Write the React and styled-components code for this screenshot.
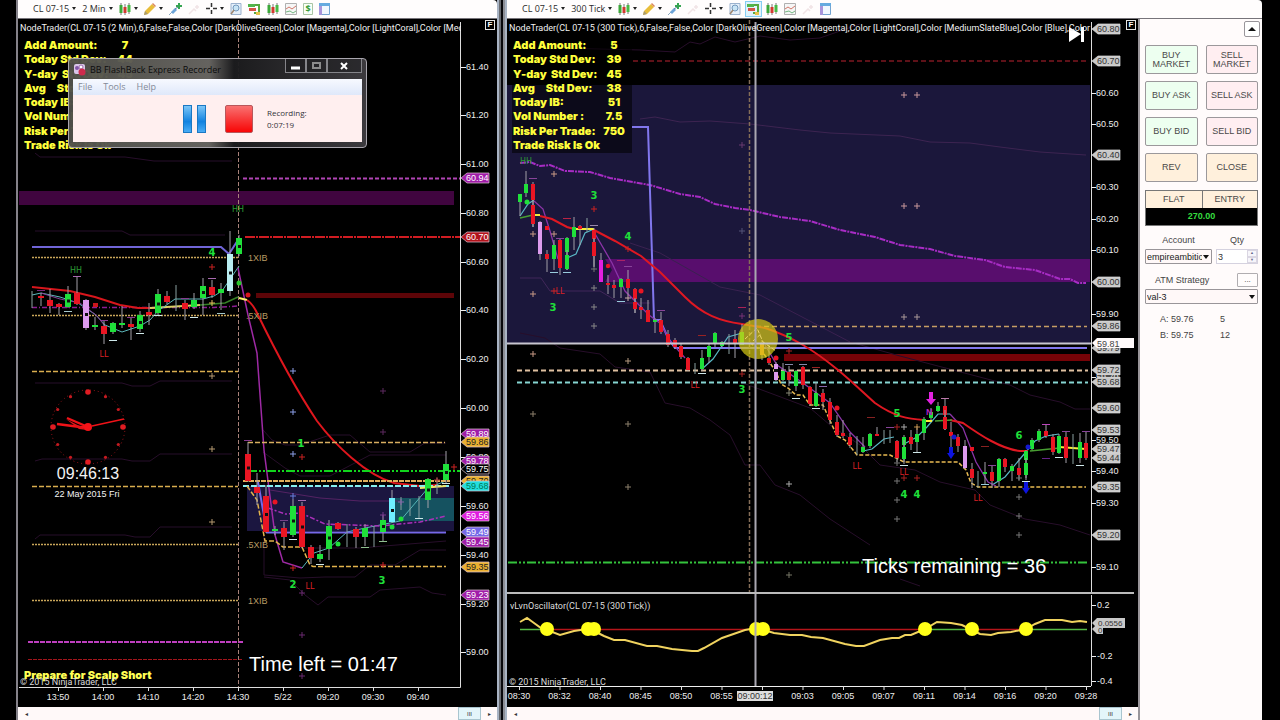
import React from "react";
import styled, { createGlobalStyle } from "styled-components";

const GlobalStyle = createGlobalStyle`
  * {
    box-sizing: border-box;
  }

  body {
    margin: 0;
    background: #000000;
    font-family: "Liberation Sans", Arial, sans-serif;
  }

  button,
  input,
  select {
    margin: 0;
    font-family: inherit;
  }
`;

const Desktop = styled.main`
  display: grid;
  grid-template-columns: 18px minmax(0, 479fr) 10px minmax(0, 755fr) 18px;
  height: 100vh;
  overflow: hidden;
`;

const Edge = styled.div`
  background: #000000;
  border-right: ${props => (props.line ? "2px solid #85828a" : "none")};
`;

const Splitter = styled.div`
  border-left: 2px solid #a9b4c4;
  border-right: 2px solid #a9b4c4;
  background: linear-gradient(
    90deg,
    #66696f 0,
    #66696f 2px,
    #08080c 2px,
    #08080c 4px,
    #8b8d94 4px
  );
`;

const Window = styled.section`
  position: relative;
  display: flex;
  flex-direction: column;
  min-width: 0;
  min-height: 0;
`;

const Toolbar = styled.header`
  display: flex;
  align-items: center;
  gap: 2px;
  flex: none;
  height: 19px;
  padding-left: 13px;
  padding-bottom: 1px;
  background: #fffdfd;
  border-bottom: 1px solid #77747a;
  border-radius: 0 4px 0 0;
`;

const ToolButton = styled.button`
  display: flex;
  align-items: center;
  justify-content: center;
  gap: 3px;
  flex: none;
  height: 16px;
  min-width: 13px;
  padding: 0 1px;
  border: 1px solid ${props => (props.active ? "#86cdf2" : "transparent")};
  background: ${props => (props.active ? "#dff3fd" : "transparent")};
  color: #2b2b2b;
  font-family: "Open Sans", sans-serif;
  font-size: 9px;
  line-height: 12px;
  white-space: nowrap;
`;

const Caret = styled.span`
  width: 0;
  height: 0;
  border: 2px solid transparent;
  border-top: 3px solid #222222;
  border-bottom: none;
`;

const Body = styled.div`
  display: flex;
  flex: 1;
  min-height: 0;
`;

const ChartColumn = styled.div`
  display: flex;
  flex: 1;
  flex-direction: column;
  min-width: 0;
  min-height: 0;
`;

const Pane = styled.div`
  position: relative;
  flex: 1;
  min-height: 0;
  background: #000000;
  overflow: hidden;
`;

const Plot = styled.svg`
  display: block;
  width: 100%;
  height: 100%;
`;

const Title = styled.h1`
  position: absolute;
  top: 3px;
  left: 2px;
  right: ${props => props.inset}px;
  margin: 0;
  overflow: hidden;
  color: #f2f2f2;
  font-family: Roboto, "Liberation Sans", sans-serif;
  font-size: 9px;
  font-weight: 400;
  line-height: 12px;
  white-space: nowrap;
`;

const FixedButton = styled.button`
  position: absolute;
  top: 1px;
  right: 2px;
  width: 10px;
  height: 10px;
  padding: 0;
  border: 1px solid #e5e5e5;
  background: #000000;
  color: #ffffff;
  font-size: 8px;
  font-weight: 700;
  line-height: 8px;
`;

const Readout = styled.dl`
  position: absolute;
  top: 18px;
  left: 5px;
  display: grid;
  grid-template-columns: 86px 30px;
  width: 120px;
  height: 116px;
  margin: 0;
  padding: 1px;
  background: rgba(0, 0, 0, 0.55);
  color: #ffff3c;
  font-family: Inter, "Open Sans", sans-serif;
  font-size: 11px;
  font-weight: 900;
  line-height: 14px;
  white-space: pre;
`;

const ReadoutValue = styled.dd`
  margin: 0;
  text-align: center;
`;

const ScrollStrip = styled.footer`
  display: flex;
  align-items: center;
  flex: none;
  height: 13px;
  padding: 0 4px;
  background: #fff9f9;
`;

const ScrollButton = styled.button`
  flex: none;
  width: ${props => (props.thumb ? "23px" : "8px")};
  height: 13px;
  margin-left: ${props => (props.thumb ? "auto" : "0")};
  margin-right: ${props => (props.thumb ? "4px" : "0")};
  padding: 0;
  border: ${props => (props.thumb ? "1px solid #a9c5cf" : "none")};
  background: ${props => (props.thumb ? "#e3f5fa" : "none")};
  color: #333333;
  font-size: 6px;
  line-height: 10px;
`;

const OrderPanel = styled.aside`
  display: flex;
  flex: none;
  flex-direction: column;
  width: 124px;
  padding: 2px 4px 0 5px;
  border-left: 2px solid #99959a;
  background: #fffbfb;
  color: #444444;
  font-size: 9px;
`;

const CollapseButton = styled.button`
  display: flex;
  align-items: center;
  justify-content: center;
  align-self: flex-end;
  width: 16px;
  height: 16px;
  margin: 0 -2px 8px 0;
  padding: 0;
  border: 1px solid #99959a;
  border-radius: 2px;
  background: #ffffff;
`;

const Triangle = styled.span`
  width: 0;
  height: 0;
  border: 4px solid transparent;
  border-bottom: 4px solid #111111;
  border-top: none;
`;

const OrderGrid = styled.div`
  display: grid;
  grid-template-columns: 1fr 1fr;
  gap: 7px 8px;
`;

const tones = { buy: "#edfff0", sell: "#ffeef1", neutral: "#fff0dc" };

const OrderButton = styled.button`
  height: 29px;
  padding: 0 4px;
  border: 1px solid #9b989b;
  border-radius: 2px;
  background: ${props => tones[props.tone]};
  color: #494949;
  font-size: 9px;
  line-height: 9px;
`;

const Position = styled.div`
  display: grid;
  grid-template-columns: 1fr 1fr;
  margin-top: 8px;
  border: 1px solid #777777;
  background: #fff0dc;
  color: #494949;
  line-height: 17px;
  text-align: center;
`;

const PositionCell = styled.span`
  border-left: ${props => (props.divided ? "1px solid #777777" : "none")};
`;

const Profit = styled.output`
  grid-column: 1 / -1;
  background: #000000;
  color: #35dc3f;
  font-weight: 700;
  line-height: 17px;
`;

const FieldRow = styled.div`
  display: grid;
  grid-template-columns: 67px 1fr;
  gap: 2px 4px;
  margin-top: 8px;
  line-height: 13px;
  text-align: center;
`;

const SelectBox = styled.div`
  position: relative;
  display: flex;
  align-items: center;
  height: 15px;

  &::after {
    content: "";
    position: absolute;
    right: 3px;
    border: 3px solid transparent;
    border-top: 4px solid #111111;
    border-bottom: none;
    pointer-events: none;
  }
`;

const Select = styled.select`
  width: 100%;
  height: 15px;
  padding: 0 9px 0 1px;
  appearance: none;
  overflow: hidden;
  border: 1px solid #999599;
  border-radius: 1px;
  background: #fff8f8;
  color: #222222;
  font-size: 9px;
  line-height: 12px;
`;

const QtyBox = styled.div`
  display: flex;
  height: 15px;
  border: 1px solid #d5d2df;
`;

const QtyInput = styled.input`
  flex: 1;
  width: 20px;
  min-width: 0;
  padding: 0 1px;
  border: none;
  background: #ffffff;
  color: #333333;
  font-size: 9px;
`;

const Stepper = styled.div`
  display: flex;
  flex-direction: column;
  width: 10px;
`;

const Step = styled.button`
  flex: 1;
  padding: 0;
  border: 1px solid #dad6e2;
  background: #f6f5fa;
  color: #66668a;
  font-size: 4px;
  line-height: 4px;
`;

const StrategyRow = styled.div`
  display: flex;
  align-items: center;
  justify-content: space-between;
  margin: 9px 0 2px;
  padding-left: 10px;
`;

const MoreButton = styled.button`
  width: 21px;
  height: 14px;
  padding: 0;
  border: 1px solid #b0adb0;
  border-radius: 1px;
  background: #fffcfc;
  color: #444444;
  font-size: 8px;
  line-height: 8px;
`;

const Quotes = styled.dl`
  display: grid;
  grid-template-columns: 60px 1fr;
  margin: 7px 0 0;
  padding-left: 15px;
  line-height: 16px;
`;

const QuoteSize = styled.dd`
  margin: 0;
`;

const Recorder = styled.section`
  position: absolute;
  top: 58px;
  left: 50px;
  width: 299px;
  height: 90px;
  padding: 0 4px 5px;
  border: 1px solid #a9a6ae;
  border-radius: 4px;
  background: linear-gradient(
    90deg,
    rgba(80, 80, 74, 0.97) 0,
    rgba(104, 102, 98, 0.97) 140px,
    rgba(28, 28, 30, 0.97) 165px,
    rgba(62, 60, 64, 0.97) 100%
  );
`;

const RecorderBar = styled.div`
  display: flex;
  align-items: center;
  height: 20px;
  gap: 4px;
  color: #0c0c0c;
  font-family: "Open Sans", sans-serif;
  font-size: 9px;
`;

const WindowButtons = styled.div`
  display: flex;
  align-self: flex-start;
  margin-left: auto;
`;

const WindowButton = styled.button`
  display: flex;
  align-items: center;
  justify-content: center;
  width: ${props => (props.wide ? "35px" : "21px")};
  height: 14px;
  padding: 0;
  border: 1px solid #85858a;
  border-top: none;
  background: rgba(20, 20, 22, 0.4);
  color: ${props => (props.dim ? "#8c8c8c" : "#ffffff")};
`;

const RecorderMenu = styled.nav`
  display: flex;
  gap: 11px;
  height: 16px;
  padding-left: 5px;
  background: linear-gradient(#f7f9ff, #dfe8fa);
`;

const MenuButton = styled.button`
  padding: 0;
  border: none;
  background: none;
  color: #838a98;
  font-family: "Open Sans", sans-serif;
  font-size: 9px;
  line-height: 14px;
`;

const RecorderBody = styled.div`
  display: flex;
  align-items: center;
  height: 47px;
  padding-left: 110px;
  background: #ffefef;
`;

const MediaButton = styled.button`
  display: flex;
  gap: 5px;
  margin-right: ${props => props.space}px;
  padding: 0;
  border: none;
  background: none;
`;

const PauseBar = styled.span`
  width: 9px;
  height: 28px;
  border: 1px solid #1a78c4;
  background: linear-gradient(#7cc6f7, #1282e0 60%, #49acf5);
`;

const StopSquare = styled.span`
  width: 28px;
  height: 28px;
  border: 1px solid #b8565a;
  border-radius: 2px;
  background: linear-gradient(#f97171, #f83a3a 50%, #f80606);
`;

const Elapsed = styled.p`
  margin: 0;
  color: #33333a;
  font-family: "Open Sans", sans-serif;
  font-size: 8px;
  line-height: 12px;
`;

const GREEN = "#1fe03a";
const RED = "#ea1523";
const LILAC = "#dd9bee";
const GOLD = "#e8bd5c";
const PURPLE = "#a01ca8";

// x, high, low, body top, body bottom, colour
const leftBars = [
  [32, 291, 308, 0, 0],
  [41, 293, 306, 296, 298, RED],
  [50, 289, 313, 300, 306, RED],
  [59, 303, 315, 304, 307, RED],
  [68, 286, 308, 294, 307, GREEN],
  [77, 277, 305, 293, 304, RED],
  [86, 299, 330, 300, 328, LILAC],
  [95, 317, 330, 325, 327, GREEN],
  [104, 320, 344, 326, 334, RED],
  [113, 322, 334, 323, 332, GREEN],
  [122, 306, 328, 323, 325, GREEN],
  [131, 318, 340, 324, 327, RED],
  [140, 311, 332, 315, 329, GREEN],
  [149, 303, 325, 312, 315, RED],
  [158, 289, 315, 294, 313, GREEN],
  [167, 291, 304, 296, 302, RED],
  [176, 285, 311, 0, 0],
  [185, 300, 320, 303, 309, RED],
  [194, 293, 309, 300, 307, GREEN],
  [203, 278, 315, 286, 298, GREEN],
  [212, 280, 298, 287, 295, RED],
  [221, 283, 310, 289, 293, GREEN],
  [230, 231, 296, 254, 291, "#b9eef2"],
  [239, 235, 256, 238, 254, GREEN],
  [248, 442, 482, 454, 481, RED],
  [257, 473, 505, 487, 493, RED],
  [266, 485, 533, 496, 532, RED],
  [275, 526, 535, 529, 531, GREEN],
  [284, 522, 550, 528, 537, RED],
  [293, 499, 537, 506, 535, GREEN],
  [302, 502, 548, 506, 547, RED],
  [311, 545, 564, 547, 558, RED],
  [320, 545, 562, 554, 559, GREEN],
  [329, 520, 560, 526, 549, GREEN],
  [338, 522, 530, 523, 529, RED],
  [347, 524, 547, 0, 0],
  [356, 527, 548, 529, 537, RED],
  [365, 524, 546, 528, 537, GREEN],
  [374, 526, 547, 0, 0],
  [383, 515, 541, 520, 532, GREEN],
  [392, 490, 523, 498, 522, "#6ff0ff"],
  [401, 497, 510, 0, 0],
  [410, 499, 516, 0, 0],
  [419, 496, 518, 0, 0],
  [428, 478, 508, 479, 500, GREEN],
  [437, 478, 494, 0, 0],
  [446, 451, 484, 464, 480, GREEN]
];

const rightBars = [
  [520, 194, 216, 194, 202, GREEN],
  [526, 171, 197, 184, 193, GREEN],
  [533, 182, 227, 184, 200, RED],
  [533, 200, 227, 205, 224, RED],
  [540, 221, 260, 222, 254, LILAC],
  [547, 250, 272, 254, 259, RED],
  [554, 240, 270, 245, 259, GREEN],
  [560, 238, 275, 240, 268, RED],
  [567, 237, 270, 238, 252, GREEN],
  [567, 250, 270, 255, 269, GREEN],
  [574, 217, 250, 227, 237, GREEN],
  [580, 225, 245, 226, 229, RED],
  [587, 218, 232, 0, 0],
  [594, 228, 267, 230, 239, RED],
  [594, 238, 267, 242, 256, RED],
  [601, 253, 282, 260, 282, "#e21fe0"],
  [608, 275, 294, 283, 285, RED],
  [614, 280, 298, 285, 288, RED],
  [621, 278, 298, 279, 287, GREEN],
  [628, 270, 295, 279, 288, RED],
  [635, 288, 313, 289, 299, RED],
  [635, 298, 313, 302, 309, RED],
  [641, 298, 319, 307, 310, RED],
  [648, 300, 322, 310, 322, RED],
  [655, 318, 333, 320, 322, GREEN],
  [661, 312, 334, 320, 332, RED],
  [668, 330, 347, 334, 345, RED],
  [675, 338, 349, 340, 347, RED],
  [681, 344, 359, 346, 357, RED],
  [688, 357, 371, 358, 370, RED],
  [695, 363, 374, 0, 0],
  [702, 350, 371, 358, 369, GREEN],
  [709, 344, 363, 346, 357, GREEN],
  [715, 332, 347, 333, 344, GREEN],
  [722, 341, 347, 342, 346, GREEN],
  [729, 334, 354, 0, 0],
  [735, 330, 358, 339, 344, RED],
  [742, 324, 345, 332, 345, GREEN],
  [762, 340, 360, 343, 355, "#f48a28"],
  [769, 345, 365, 358, 363, RED],
  [776, 362, 381, 364, 380, LILAC],
  [783, 363, 381, 371, 380, GREEN],
  [789, 366, 386, 372, 380, RED],
  [796, 370, 391, 371, 386, GREEN],
  [803, 366, 389, 367, 385, RED],
  [810, 386, 406, 387, 404, RED],
  [816, 382, 407, 393, 406, GREEN],
  [823, 389, 410, 393, 402, RED],
  [830, 398, 424, 402, 420, RED],
  [837, 415, 437, 422, 435, RED],
  [843, 420, 438, 433, 436, RED],
  [850, 433, 448, 437, 445, RED],
  [857, 436, 455, 0, 0],
  [863, 437, 453, 447, 452, GREEN],
  [870, 433, 448, 434, 446, GREEN],
  [877, 427, 436, 434, 436, RED],
  [884, 430, 444, 0, 0],
  [890, 430, 443, 0, 0],
  [897, 440, 462, 441, 458, RED],
  [904, 435, 462, 437, 445, GREEN],
  [904, 440, 464, 447, 459, GREEN],
  [911, 430, 450, 437, 444, RED],
  [917, 426, 452, 434, 442, GREEN],
  [924, 417, 440, 419, 433, GREEN],
  [931, 408, 420, 412, 418, GREEN],
  [938, 402, 412, 406, 411, GREEN],
  [945, 399, 430, 406, 415, RED],
  [945, 410, 430, 417, 429, RED],
  [951, 422, 448, 432, 436, RED],
  [958, 434, 452, 437, 446, RED],
  [965, 440, 469, 446, 468, LILAC],
  [972, 463, 488, 469, 478, RED],
  [978, 471, 488, 0, 0],
  [985, 462, 484, 472, 474, GREEN],
  [992, 466, 488, 472, 481, RED],
  [999, 458, 487, 459, 481, GREEN],
  [1005, 458, 472, 459, 467, RED],
  [1012, 464, 481, 466, 471, GREEN],
  [1019, 458, 480, 468, 475, RED],
  [1026, 450, 478, 451, 460, GREEN],
  [1026, 458, 480, 463, 475, GREEN],
  [1032, 438, 450, 440, 449, GREEN],
  [1039, 429, 442, 431, 440, GREEN],
  [1046, 425, 438, 431, 436, RED],
  [1053, 434, 455, 437, 452, RED],
  [1059, 434, 454, 436, 453, GREEN],
  [1066, 431, 463, 437, 458, RED],
  [1073, 434, 464, 0, 0],
  [1080, 433, 463, 442, 458, GREEN],
  [1086, 432, 460, 443, 458, RED]
];

// text, x, y, colour
const leftNotes = [
  ["HH", 76, 273, "#2c9a35"],
  ["HH", 238, 212, "#2c9a35"],
  ["LL", 104, 357, "#da2025"],
  ["LL", 310, 589, "#da2025"],
  ["4", 212, 256, GREEN],
  ["1", 301, 447, GREEN],
  ["2", 293, 588, GREEN],
  ["3", 382, 584, GREEN]
];

const rightNotes = [
  ["HH", 526, 164, "#2c9a35"],
  ["3", 594, 199, GREEN],
  ["4", 628, 240, GREEN],
  ["3", 553, 311, GREEN],
  ["LL", 560, 294, "#da2025"],
  ["LL", 695, 388, "#da2025"],
  ["3", 742, 393, GREEN],
  ["5", 789, 341, GREEN],
  ["5", 897, 417, GREEN],
  ["LL", 857, 469, "#da2025"],
  ["LL", 904, 475, "#da2025"],
  ["4", 904, 498, GREEN],
  ["4", 917, 498, GREEN],
  ["LL", 978, 501, "#da2025"],
  ["6", 1019, 439, GREEN]
];

const leftCrosses = [
  [212, 267, "#c22"], [212, 303, GOLD], [212, 376, "#b69a70"], [212, 449, "#b69a70"],
  [212, 522, "#b69a70"], [293, 371, "#8c9fe8"], [293, 412, "#8c9fe8"], [293, 454, "#8c9fe8"],
  [302, 457, "#c22"], [383, 391, "#5e2a60"], [383, 432, "#5e2a60"], [293, 496, "#6b80e0"],
  [293, 568, "#c22"], [302, 593, "#6b2a70"], [302, 635, "#6b2a70"], [302, 676, "#6b2a70"],
  [383, 515, "#7d3a90"], [383, 565, "#c22"], [401, 502, "#86a"], [437, 480, "#a33"], [454, 467, "#c22"]
];

const rightCrosses = [
  [554, 174, "#c99a86"], [533, 234, "#c99a86"], [554, 234, "#c99a86"], [594, 209, "#c22"],
  [628, 249, "#c22"], [594, 269, "#777"], [594, 288, "#888"], [594, 307, "#888"], [594, 326, "#888"],
  [533, 294, "#c99a86"], [533, 354, "#c99a86"], [628, 361, "#b69a80"], [628, 298, "#caa"],
  [554, 291, "#c22"], [742, 231, "#555478"], [742, 145, "#693a70"], [742, 316, "#737"],
  [533, 414, "#8d806c"], [628, 424, "#8d806c"], [628, 487, "#8d806c"],
  [904, 95, "#c9989c"], [917, 95, "#c9989c"], [904, 206, "#c9989c"], [917, 206, "#c9989c"],
  [904, 317, "#a99"], [917, 317, "#a99"], [742, 374, "#a22"], [789, 351, "#a22"],
  [789, 393, "#887"], [789, 484, "#aaa"], [789, 575, "#776"], [897, 427, "#a22"],
  [904, 427, "#aaa"], [917, 427, "#b84"], [897, 463, "#777"], [897, 481, "#777"],
  [897, 500, "#777"], [897, 519, "#777"], [904, 478, "#a22"], [917, 478, "#a22"],
  [1019, 478, "#777"], [1019, 497, "#777"], [1019, 516, "#777"], [1019, 535, "#777"]
];

// short level marks above and below bars
const leftDashes = [
  [77, 276, "#a96ab0"], [41, 290, "#7a2a80"], [68, 311, "#a8c9cc"], [104, 320, "#8a3a90"],
  [113, 340, "#cfe8ea"], [131, 317, "#8a3a90"], [140, 333, "#cfe8ea"], [158, 315, "#cfe8ea"],
  [185, 298, "#8a3a90"], [194, 317, "#cfe8ea"], [212, 278, "#a96ab0"], [221, 313, "#9fc6ca"],
  [248, 440, "#8a3a90"], [302, 500, "#a96ab0"], [293, 539, "#cfe8ea"], [284, 520, "#76408a"],
  [320, 564, "#cfe8ea"], [365, 547, "#8fc08f"], [383, 541, "#8fc08f"], [419, 518, "#cfe8ea"],
  [446, 483, "#cfe8ea"]
];

const rightDashes = [
  [533, 178, "#849"], [560, 238, "#849"], [554, 272, "#9cd"], [567, 272, "#9cd"], [567, 218, "#b24"],
  [594, 225, "#98a"], [628, 266, "#849"], [621, 301, "#9cd"], [621, 260, "#a26"], [661, 310, "#849"],
  [702, 373, "#cfe8ea"], [702, 335, "#922"], [742, 307, "#a25"], [789, 364, "#88a"],
  [803, 364, "#88a"], [796, 398, "#cfe8ea"], [816, 408, "#cfe8ea"], [823, 386, "#86a"],
  [816, 367, "#922"], [871, 417, "#822"], [890, 427, "#849"], [904, 465, "#cfe8ea"],
  [917, 452, "#cfe8ea"], [945, 398, "#b7a"], [1046, 424, "#b4b"], [1066, 431, "#849"],
  [1086, 431, "#849"], [985, 484, "#9cd"], [992, 465, "#849"], [985, 446, "#822"],
  [1026, 481, "#cfe8ea"], [1059, 457, "#cfe8ea"], [1080, 465, "#cfe8ea"], [1046, 458, "#628"]
];

const leftTicks = [
  ["61.40", 67], ["61.20", 115], ["61.00", 164], ["60.80", 213], ["60.60", 262], ["60.40", 310],
  ["60.20", 359], ["60.00", 408], ["59.80", 457], ["59.60", 506], ["59.40", 555], ["59.20", 604],
  ["59.00", 652]
];

const rightTicks = [
  ["60.60", 93], ["60.50", 124], ["60.30", 187], ["60.20", 219], ["60.10", 250], ["59.90", 314],
  ["59.70", 377], ["59.50", 440], ["59.40", 471], ["59.30", 503], ["59.10", 567]
];

const leftTags = [
  ["60.94", 178, PURPLE, "#fff"], ["60.70", 237, "#b3131b", "#fff"], ["59.89", 434, PURPLE, "#fff"],
  ["59.86", 442, "#eab02f", "#222"], ["59.78", 461, PURPLE, "#fff"], ["59.75", 469, "#000", "#fff"],
  ["59.70", 481, "#eab02f", "#222"], ["59.68", 486, "#22dede", "#075"], ["59.56", 516, "#e01be0", "#fff"],
  ["59.49", 532, "#7468e8", "#fff"], ["59.45", 542, PURPLE, "#fff"], ["59.35", 567, "#eab02f", "#222"],
  ["59.23", 595, PURPLE, "#fff"]
];

const rightTags = [
  ["60.80", 29], ["60.70", 61], ["60.40", 155], ["60.00", 282], ["59.86", 326], ["59.79", 348],
  ["59.72", 370], ["59.68", 382], ["59.60", 408], ["59.53", 430], ["59.47", 449], ["59.44", 458],
  ["59.35", 487], ["59.20", 535]
];

const leftTimes = ["13:50", "14:00", "14:10", "14:20", "14:30", "5/22", "09:20", "09:30", "09:40"];

const rightTimes = [
  "08:30", "08:32", "08:40", "08:45", "08:50", "08:55", "", "09:03",
  "09:05", "09:07", "09:11", "09:14", "09:16", "09:20", "09:28"
];

const stats = [
  ["Add Amount:", "5"],
  ["Today Std Dev:", "39"],
  ["Y-day  Std Dev:", "45"],
  ["Avg     Std Dev:", "38"],
  ["Today IB:", "51"],
  ["Vol Number :", "7.5"],
  ["Risk Per Trade:", "750"]
];

const leftStats = [["Add Amount:", "7"], ["Today Std Dev:", "44"], ...stats.slice(2)];

const colorArgs =
  "6,False,False,Color [DarkOliveGreen],Color [Magenta],Color [LightCoral],Color [MediumSlateBlue],Color [Blue],Color [Purple]";

function Bars({ data, width }) {
  return data.map(([x, high, low, top, bottom, color], i) => (
    <g key={i}>
      <path d={`M${x} ${high}V${low}`} stroke={color ? "#a3a0a8" : "#8aa0a0"} />
      {color && (
        <rect x={x - width / 2} y={top} width={width} height={bottom - top} fill={color} />
      )}
      {bottom - top > 11 && width > 5 && (
        <rect x={x - 1} y={(top + bottom) / 2 - 1} width="3" height="3" fill="#101010" />
      )}
    </g>
  ));
}

function Marks({ notes, crosses, dashes }) {
  return (
    <g>
      {crosses.map(([x, y, color], i) => (
        <path key={i} d={`M${x - 3} ${y}h6M${x} ${y - 3}v6`} stroke={color} />
      ))}
      {dashes.map(([x, y, color], i) => (
        <path key={i} d={`M${x - 4} ${y + 0.5}h8`} stroke={color} />
      ))}
      {notes.map(([text, x, y, color], i) => (
        <text
          key={i}
          x={x}
          y={y}
          fill={color}
          fontFamily="'DejaVu Sans', sans-serif"
          fontSize={text.length > 1 ? 8 : 10}
          fontWeight={text.length > 1 ? 400 : 700}
          textAnchor="middle"
        >
          {text}
        </text>
      ))}
    </g>
  );
}

function Ticks({ data, x }) {
  return data.map(([text, y]) => (
    <g key={text}>
      <path d={`M${x} ${y + 0.5}h5`} stroke="#eee" />
      <text x={x + 5} y={y + 3} fill="#eee" fontSize="9">{text}</text>
    </g>
  ));
}

function Tags({ data, x, fill = "#c9c9c9", ink = "#333" }) {
  return data.map(([text, y, color = fill, textColor = ink]) => (
    <g key={text}>
      <path
        d={`M${x} ${y}l6-5h22v10h-22z`}
        fill={color}
        stroke={color === fill ? "#ddd" : "#e3c7d8"}
        strokeWidth="0.7"
      />
      <text x={x + 5} y={y + 3} fill={textColor} fontSize="9">{text}</text>
    </g>
  ));
}

function Clock() {
  const hours = [...Array(12)].map((_, i) => (i * Math.PI) / 6);
  return (
    <g>
      <circle cx="88" cy="427" r="37" fill="none" stroke="#a3151b" strokeDasharray="1 3" />
      {hours.map((a, i) => (
        <circle
          key={i}
          cx={88 + 35 * Math.sin(a)}
          cy={427 - 35 * Math.cos(a)}
          r={i % 3 ? 1.6 : 2.8}
          fill={i % 3 ? "#c51a20" : "#e01c22"}
        />
      ))}
      <path d="M88 427L67 418M88 428L57 424" stroke="#f01218" strokeWidth="2.4" />
      <path d="M87 430L66 419L79 429z" fill="#e01218" />
      <path d="M92 426L124 419" stroke="#f01218" strokeWidth="1.6" />
      <circle cx="88" cy="427" r="4" fill="#f51318" />
      <text x="88" y="479" fill="#f4f4f4" fontSize="16" textAnchor="middle">09:46:13</text>
      <text x="87" y="497" fill="#f4f4f4" fontSize="9" textAnchor="middle">22 May 2015 Fri</text>
    </g>
  );
}

function LeftChart() {
  return (
    <Plot viewBox="18 19 479 688" role="img" aria-label="CL 07-15 2 minute chart">
      <rect x="19" y="191" width="435" height="14" fill="#40053f" />
      <rect x="256" y="293" width="198" height="5" fill="#5d0508" />
      <rect x="247" y="486" width="207" height="45" fill="#1b1640" />
      <rect x="392" y="498" width="62" height="23" fill="#155260" />
      <g fill="none" stroke="#270e2a">
        <path d="M35 153L40 157H125L154 161H232" />
        <path d="M35 231H122L130 235H225" />
        <path d="M35 383H122L132 386H150L160 381H232" />
        <path d="M35 461L42 459H122L132 461H150L160 454H232" />
        <path d="M35 539L40 535H125L135 537H150L160 527H232" />
        <path d="M263 430L272 440L285 445H300L330 435H350L370 452H410L425 443H446" />
        <path d="M263 452L285 468L300 476H330L370 455H446" />
        <path d="M264 480V575L300 578L325 577H355L370 565H395L420 550H446" />
        <path d="M264 577L290 580L305 595L318 605L328 597H370L380 590L420 587L432 593L446 595" />
        <path d="M270 490L320 498L360 501H400" stroke="#542263" />
        <path d="M300 548H360L446 541" />
      </g>
      <g fill="none">
        <path d="M32 257.500H238M32 315.500H238M32 544.500H238M32 600.500H238" stroke="#c9a65a" strokeWidth="1.5" strokeDasharray="2 1" />
        <path d="M32 371.500H238M32 486.500H238" stroke="#d8ad4e" strokeWidth="1.5" strokeDasharray="5 2" />
        <path d="M32 307.500H214L239 306" stroke="#8c1d92" strokeWidth="1.5" strokeDasharray="5 2 1 2" />
        <path d="M28 642H243" stroke="#bf3fc0" strokeWidth="2" strokeDasharray="5 1" />
        <path d="M28 659.500H243" stroke="#a3151c" strokeDasharray="4 1" />
        <path d="M243 178.500H461" stroke="#b045b4" strokeWidth="2" strokeDasharray="4 2" />
        <path d="M245 237H461" stroke="#d01c22" strokeWidth="2" strokeDasharray="10 1 2 1" />
        <path d="M238.500 20V687" stroke="#a8827a" strokeDasharray="4 2" />
        <path d="M32 247H221L229 254L238 240" stroke="#7065d8" strokeWidth="2" />
        <path d="M32 287L70 291L95 297L120 305L138 308H160" stroke="#d8161c" strokeWidth="2" />
        <path d="M150 308L200 305" stroke="#d9cf65" strokeWidth="2" />
        <path d="M200 305L225 303L238 297" stroke="#368126" strokeWidth="1.5" />
        <path d="M32 295L41 293L60 297L78 303L96 315L105 325L122 332L140 326L150 320L158 311L175 299H203L214 296L222 291L239 266" stroke="#5cb8bb" />
        <path d="M41 293L60 299L80 303L96 315L105 326" stroke="#833b91" />
        <path d="M238 268L248 315L257 353L264 450L275 535L283 562L302 568" stroke="#9e2aa5" strokeWidth="1.5" />
        <path d="M302 568L314 553L329 548L347 532L370 527L400 521L428 488L446 481" stroke="#57b7b8" />
        <path d="M239 298L247 300" stroke="#fff36a" strokeWidth="2" />
        <path d="M247 300Q253 304 258 315C275 350 295 388 317 421C335 445 366 475 394 483L420 486L437 485" stroke="#df161d" strokeWidth="2" />
        <path d="M248 442.500H445" stroke="#d8ae60" strokeWidth="1.5" strokeDasharray="5 2" />
        <path d="M248 471H461" stroke="#11d51c" strokeWidth="2" strokeDasharray="9 2 2 2 2 2" />
        <path d="M243 481H450" stroke="#dfaf5d" strokeWidth="2" strokeDasharray="5 1" />
        <path d="M243 486H450" stroke="#85eef0" strokeWidth="2" strokeDasharray="6 2" />
        <path d="M258 482L267 532.500H446" stroke="#7668e8" strokeWidth="2" />
        <path d="M247 486L257 500L265 541H275L283 547H302L310 565L313 566.500H446" stroke="#e2b34c" strokeWidth="1.500" strokeDasharray="5 2" />
        <path d="M268 508L285 514L301 513L325 524L380 526L420 522L446 516" stroke="#aa30ba" strokeWidth="1.500" strokeDasharray="5 2 2 2" />
        <path d="M420 488L446 486" stroke="#eee46b" strokeWidth="2" />
      </g>
      <Bars data={leftBars} width={6} />
      <Marks notes={leftNotes} crosses={leftCrosses} dashes={leftDashes} />
      <circle cx="239" cy="283" r="2.500" fill="#27c62c" />
      <circle cx="248" cy="295" r="2.500" fill="#d8161c" />
      <circle cx="275" cy="502" r="2.500" fill={RED} />
      <circle cx="338" cy="544" r="2.500" fill={GREEN} />
      <circle cx="401" cy="519" r="2.500" fill={GREEN} />
      <circle cx="392" cy="527" r="2.500" fill={GREEN} />
      <rect x="93" y="303" width="5" height="4" fill="#c9161c" />
      <g fill="#b99b63" fontSize="9">
        <text x="248" y="261">1XIB</text>
        <text x="246" y="319">.5XIB</text>
        <text x="246" y="548">.5XIB</text>
        <text x="248" y="604">1XIB</text>
      </g>
      <Clock />
      <text x="249" y="671" fill="#fff" fontSize="20">Time left = 01:47</text>
      <text
        x="24"
        y="679"
        fill="#ffff55"
        fontFamily="Inter, sans-serif"
        fontSize="11"
        fontWeight="900"
      >
        Prepare for Scalp Short
      </text>
      <text x="20" y="685" fill="#ddd" fontFamily="Roboto, sans-serif" fontSize="9">© 2015 NinjaTrader, LLC</text>
      <path d="M460.500 22V687.500H19" fill="none" stroke="#ddd" />
      {leftTimes.map((time, i) => (
        <g key={time}>
          <path d={`M${58.5 + i * 45} 687v4`} stroke="#ddd" />
          <text x={58 + i * 45} y="700" fill="#eee" fontSize="9" textAnchor="middle">{time}</text>
        </g>
      ))}
      <Ticks data={leftTicks} x={461} />
      <Tags data={leftTags} x={461} />
    </Plot>
  );
}

function Oscillator() {
  return (
    <g fill="none">
      <text x="510" y="609" fill="#ddd" fontFamily="Roboto, sans-serif" fontSize="9">
        vLvnOscillator(CL 07-15 (300 Tick))
      </text>
      <path d="M547 629.500H925M972 629.500H1026" stroke="#b5151a" strokeWidth="1.500" />
      <path d="M520 629.500H547M925 629.500H972M1026 629.500H1087" stroke="#54b945" strokeWidth="1.500" />
      <path
        d="M520 622L527 618L534 623L541 628L547 630L560 635L574 631L587 629L596 632L604 636L614 640L625 640L647 646H657L672 649L692 651L698 651L704 648L722 638L745 630L756 628L764 630L774 633L790 635L802 635L811 637L823 638L845 644L856 646H864L880 640L892 638H899L905 635L911 635L925 629L937 622L951 623L962 625L972 630L980 634L991 635L998 633L1011 632L1026 629L1035 624L1045 620H1062L1072 622L1080 621L1087 622"
        stroke="#f0d35f"
        strokeWidth="2"
      />
      {[547, 588, 594, 756, 763, 925, 972, 1026].map(x => (
        <circle key={x} cx={x} cy="629" r="7" fill="#ffff17" />
      ))}
      <g fill="#eee" fontSize="9">
        <path d="M1091 605.500h5M1091 656.500h5M1091 681.500h5" stroke="#eee" />
        <text x="1097" y="608">0.2</text>
        <text x="1097" y="659">-0.2</text>
        <text x="1097" y="684">-0.4</text>
      </g>
      <path d="M1092 623l5-5h28v10h-28zM1092 629l5-5h6v10h-6z" fill="#c9c9c9" />
      <text x="1098" y="626" fill="#333" fontSize="8">0.0556</text>
      <text x="1098" y="633" fill="#333" fontSize="8">0</text>
      <text x="509" y="685" fill="#ddd" fontFamily="Roboto, sans-serif" fontSize="9">© 2015 NinjaTrader, LLC</text>
      <path d="M507 686.500H1091" stroke="#eee" />
      {rightTimes.map((time, i) => (
        <g key={i}>
          <path d={`M${519.5 + i * 40.5} 686v4`} stroke="#ddd" />
          <text x={519 + i * 40.5} y="699" fill="#eee" fontSize="9" textAnchor="middle">{time}</text>
        </g>
      ))}
      <rect x="737" y="691" width="36" height="10" fill="#ddd" />
      <text x="755" y="699" fill="#333" fontSize="9" textAnchor="middle">09:00:12</text>
    </g>
  );
}

function RightChart() {
  return (
    <Plot viewBox="507 19 631 688" role="img" aria-label="CL 07-15 300 tick chart with oscillator">
      <rect x="507" y="85" width="583" height="258" fill="#1b173b" />
      <path d="M605 259H1090V282H605L612 270z" fill="#580e6d" />
      <rect x="784" y="354" width="306" height="7" fill="#760307" />
      <g fill="none" stroke="#270e2a">
        <path d="M560 48L640 50L675 52L690 42L700 44L715 37L735 42L760 36L790 40L820 38L860 24" />
        <path d="M640 119L655 117L680 122L710 121L750 124L800 130L830 133L900 136L930 142L970 143L1000 147L1040 152L1086 155" stroke="#3d2451" />
        <path d="M520 278H541L550 291H600L620 303H650" stroke="#41275a" />
        <path d="M630 243L660 253L690 270L720 287L760 295L850 342" stroke="#3a2150" />
        <path d="M850 342L900 356L1010 385L1030 395L1060 402L1075 409H1090" />
        <path d="M520 333L545 338L560 348L600 354L615 367L650 372L665 403L690 408L710 420L730 435L745 465H760L775 485L800 495L830 519L870 545" />
        <path d="M740 382L770 393L810 408L830 425L860 445L880 465L915 470L940 482L975 490L990 505L1025 519L1060 525L1090 535" />
        <path d="M900 579L920 586" />
      </g>
      <g fill="none">
        <path d="M633 61H1088" stroke="#7d1720" strokeWidth="1.500" strokeDasharray="5 3" />
        <path d="M520 163L530 162L540 166L550 165L565 171L590 172L610 178L650 185L680 194L700 197L715 204L735 208L750 210L780 217L810 221L840 230L875 237L900 245L930 249L955 256L985 260L1005 267L1035 270L1060 279L1070 279L1078 283H1086" stroke="#a72cc4" strokeWidth="2" strokeDasharray="6 1 2 1" />
        <path d="M517 370.500H1088" stroke="#dfc0a0" strokeWidth="2" strokeDasharray="5 3" />
        <path d="M517 382.500H1088" stroke="#86d5d2" strokeWidth="2" strokeDasharray="5 3" />
        <path d="M508 562.500H1088" stroke="#34c33c" strokeWidth="2" strokeDasharray="9 2 2 2 2 2" />
        <path d="M632 127H648L654 320H660L668 338L675 348H1087" stroke="#8177ed" strokeWidth="2" />
        <path d="M756 326.500H1087" stroke="#c79e64" strokeWidth="1.500" strokeDasharray="5 3" />
        <path d="M750 343L762 351L776 372L781 384L788 388L796 395H803L810 405H823L837 436L845 440L857 455H890L904 462H958L966 470L971 483L978 487H1086" stroke="#e9bb52" strokeWidth="1.500" strokeDasharray="4 2" />
        <path d="M520 216L528 204L534 200M567 258L576 254L585 233L594 229M702 369L713 359L728 337L742 333M863 451L872 449L884 439L894 437M904 444L917 437L927 427L938 414H950M992 485L1005 477L1020 459L1035 441L1046 436L1059 434" stroke="#59b7c5" strokeWidth="1.200" />
        <path d="M534 201L543 209L550 231L558 259M594 232L612 263L625 291L649 315L661 324L670 341L685 358M765 345L777 365L803 383L830 403L850 432L865 447M950 414L963 428L976 462L988 482L996 486" stroke="#8b34a8" strokeWidth="1.300" />
        <path d="M540 216L552 219L567 227L574 229M594 230L615 241L641 256L660 272L685 297C703 315 720 321 742 324L765 328Q784 334 803 345C835 364 860 390 875 403C895 417 908 419 924 420M950 420L963 423C980 435 1001 449 1020 451H1028" stroke="#df1822" strokeWidth="2" />
        <path d="M520 218L533 215M935 421L952 420M1030 451L1060 448" stroke="#489d32" strokeWidth="1.500" />
        <path d="M533 215H540M574 229H594M923 421H932M1059 447L1086 449" stroke="#f4ed3a" strokeWidth="2" />
        <path d="M749.500 20V592" stroke="#846d57" strokeWidth="1.500" strokeDasharray="4 2" />
      </g>
      <Bars data={rightBars} width={4} />
      <Marks notes={rightNotes} crosses={rightCrosses} dashes={rightDashes} />
      <circle cx="527" cy="202" r="2.500" fill={GREEN} />
      <rect x="545" y="226" width="4" height="4" fill={RED} />
      <circle cx="608" cy="266" r="2.200" fill={RED} />
      <circle cx="641" cy="291" r="2.500" fill={RED} />
      <circle cx="776" cy="358" r="2.500" fill={RED} />
      <circle cx="837" cy="408" r="2.500" fill={RED} />
      <rect x="970" y="447" width="4" height="4" fill={RED} />
      <rect x="774" y="369" width="4" height="3" fill="#111" />
      <path d="M929 392h4v7h3l-5 6l-5-6h3z" fill="#e222e0" />
      <text x="926" y="415" fill="#b323c5" fontSize="9" fontWeight="700">N</text>
      <path d="M949 447h4v6h2l-4 6l-4-6h2zM1024 482h4v6h2l-4 6l-4-6h2z" fill="#0d14df" />
      <circle cx="954" cy="437" r="2.500" fill="#1518ce" />
      <circle cx="1028" cy="447" r="2.500" fill="#1518ce" />
      <circle cx="758" cy="339" r="20" fill="#d8cc15" opacity="0.7" />
      <path d="M745 339L757 328L763 342L776 351M753 341L762 333" stroke="#eed66a" fill="none" strokeDasharray="4 2" />
      <Oscillator />
      <path d="M507 343.500H1091" stroke="#c8c6d0" strokeWidth="2" />
      <path d="M755.500 22V686" stroke="#aaa7b1" strokeWidth="2" />
      <path d="M507 593H1134" stroke="#bbb" strokeWidth="2" />
      <path d="M1091.500 22V592M1091.500 595V686" stroke="#ddd" />
      <Ticks data={rightTicks} x={1091} />
      <Tags data={rightTags} x={1092} />
      <path d="M1092 343l5-5h37v10h-37z" fill="#fffafa" />
      <text x="1097" y="347" fill="#444" fontSize="9">59.81</text>
      <path d="M1069 27v15l12-8z M1081 27h3v15h-3z" fill="#fff" />
      <text x="862" y="573" fill="#fff" fontSize="20">Ticks remaining = 36</text>
    </Plot>
  );
}

const CandleIcon = () => (
  <svg width="12" height="12" viewBox="0 0 12 12">
    <path d="M2 0v12M6 1v11M10 0v11" stroke="#555" strokeWidth="0.8" />
    <rect x="0.500" y="2" width="3" height="8" fill="#3ca83a" />
    <rect x="4.500" y="4" width="3" height="6" fill="#d33a30" />
    <rect x="8.500" y="2" width="3" height="7" fill="#48ba45" />
  </svg>
);

const PencilIcon = () => (
  <svg width="12" height="12" viewBox="0 0 12 12">
    <path d="M0 12L1 8L8 1L11 4L4 11z" fill="#e8bd3a" />
    <path d="M0 12L1 8L4 11z" fill="#a79a70" />
    <path d="M8 1L9 0L12 3L11 4z" fill="#d98662" />
  </svg>
);

const ProbeIcon = () => (
  <svg width="13" height="12" viewBox="0 0 13 12">
    <path d="M0 12L3 9" stroke="#8aa8c0" />
    <path d="M2 9L6 5L8 7L4 11z" fill="#6da4d8" />
    <path d="M6 6L9 4" stroke="#5d7ea0" />
    <path d="M10 0v6M7 3h6" stroke="#36a552" strokeWidth="2" />
  </svg>
);

const GhostIcon = () => (
  <svg width="12" height="12" viewBox="0 0 12 12" opacity="0.25">
    <path d="M1 11L6 6L8 8M9 2v4M7 4h4" stroke="#c99ba5" fill="none" strokeWidth="1.500" />
  </svg>
);

const CrosshairIcon = () => (
  <svg width="11" height="11" viewBox="0 0 11 11">
    <path d="M5.500 0v4M5.500 7v4M0 5.500h4M7 5.500h4" stroke="#333" strokeWidth="1.500" />
  </svg>
);

const ZoomIcon = () => (
  <svg width="12" height="12" viewBox="0 0 12 12">
    <path d="M1 0.500h10v11h-10z" fill="#e5effa" stroke="#9cb2ce" />
    <circle cx="6" cy="5" r="3" fill="#c8e4f5" stroke="#7398bd" />
    <path d="M4 7L1 11" stroke="#a08770" strokeWidth="1.500" />
  </svg>
);

const TraderIcon = () => (
  <svg width="13" height="12" viewBox="0 0 13 12">
    <rect y="1" width="7" height="3" fill="#54b54d" />
    <rect x="1" y="5" width="7" height="3" fill="#d75347" />
    <path d="M7 2h4v8M6 10h6" stroke="#57a940" strokeWidth="2" fill="none" />
    <path d="M8 9h4v3h-4z" fill="#e6c24c" />
  </svg>
);

const IndicatorIcon = () => (
  <svg width="12" height="12" viewBox="0 0 12 12">
    <path d="M0.500 0.500h11v11h-11z" fill="#f6f6f6" stroke="#b0b0b0" />
    <path d="M1 6L4 4L7 6L11 3" stroke="#d37669" fill="none" />
    <path d="M1 9L5 8L8 10L11 8" stroke="#73b881" fill="none" />
  </svg>
);

const MoneyIcon = () => (
  <svg width="10" height="12" viewBox="0 0 10 12">
    <path d="M0.500 0.500h9v11h-9z" fill="#f8fff7" stroke="#a9c5a5" />
    <text x="5" y="9" fill="#379b38" fontSize="9" fontWeight="700" textAnchor="middle">$</text>
  </svg>
);

const PanelIcon = () => (
  <svg width="11" height="12" viewBox="0 0 11 12">
    <path d="M0.500 0.500h10v11h-10z" fill="#f1f8ff" stroke="#73a4d1" />
    <path d="M0 0h11v3h-11z" fill="#66abe0" />
    <path d="M0 3h3v9h-3z" fill="#a895db" />
  </svg>
);

function ChartToolbar({ interval, active }) {
  return (
    <Toolbar>
      <ToolButton>CL 07-15 <Caret /></ToolButton>
      <ToolButton>{interval} <Caret /></ToolButton>
      <ToolButton aria-label="Chart style"><CandleIcon /><Caret /></ToolButton>
      <ToolButton aria-label="Drawing tools"><PencilIcon /><Caret /></ToolButton>
      <ToolButton aria-label="Zoom in"><ProbeIcon /></ToolButton>
      <ToolButton aria-label="Zoom out"><GhostIcon /></ToolButton>
      <ToolButton aria-label="Cursor"><CrosshairIcon /><Caret /></ToolButton>
      <ToolButton aria-label="Magnify"><ZoomIcon /></ToolButton>
      <ToolButton aria-label="Chart trader" active={active}><TraderIcon /></ToolButton>
      <ToolButton aria-label="Data series"><CandleIcon /></ToolButton>
      <ToolButton aria-label="Indicators"><IndicatorIcon /></ToolButton>
      <ToolButton aria-label="Strategies">{active ? <GhostIcon /> : <MoneyIcon />}</ToolButton>
      <ToolButton aria-label="Properties"><PanelIcon /></ToolButton>
    </Toolbar>
  );
}

function Stats({ rows }) {
  return (
    <Readout>
      {rows.map(([name, value]) => (
        <React.Fragment key={name}>
          <dt>{name}</dt>
          <ReadoutValue>{value}</ReadoutValue>
        </React.Fragment>
      ))}
      <dt>Trade Risk Is Ok</dt>
    </Readout>
  );
}

function Scroll() {
  return (
    <ScrollStrip>
      <ScrollButton aria-label="Scroll left">◂</ScrollButton>
      <ScrollButton thumb aria-label="Scroll position">III</ScrollButton>
      <ScrollButton aria-label="Scroll right">▸</ScrollButton>
    </ScrollStrip>
  );
}

function RecorderWindow() {
  return (
    <Recorder>
      <RecorderBar>
        <svg width="13" height="13" viewBox="0 0 13 13">
          <rect x="1" y="1" width="11" height="10" rx="2" fill="#d8c5e8" />
          <circle cx="4" cy="5" r="2" fill="#8256a8" />
          <circle cx="8" cy="4" r="2" fill="#fff" stroke="#9a6bb0" />
          <circle cx="9" cy="9" r="3.500" fill="#cf2b4d" />
        </svg>
        BB FlashBack Express Recorder
        <WindowButtons>
          <WindowButton aria-label="Minimize">
            <svg width="9" height="8"><path d="M0 6h9" stroke="currentColor" strokeWidth="3" /></svg>
          </WindowButton>
          <WindowButton dim aria-label="Maximize">
            <svg width="9" height="8"><path d="M1 1h7v5h-7z" fill="none" stroke="currentColor" strokeWidth="2" /></svg>
          </WindowButton>
          <WindowButton wide aria-label="Close">
            <svg width="9" height="8"><path d="M1 1L7 7M7 1L1 7" stroke="currentColor" strokeWidth="2" /></svg>
          </WindowButton>
        </WindowButtons>
      </RecorderBar>
      <RecorderMenu>
        <MenuButton>File</MenuButton>
        <MenuButton>Tools</MenuButton>
        <MenuButton>Help</MenuButton>
      </RecorderMenu>
      <RecorderBody>
        <MediaButton space={19} aria-label="Pause">
          <PauseBar />
          <PauseBar />
        </MediaButton>
        <MediaButton space={14} aria-label="Stop">
          <StopSquare />
        </MediaButton>
        <Elapsed>
          Recording:
          <br />
          0:07:19
        </Elapsed>
      </RecorderBody>
    </Recorder>
  );
}

function ChartTrader() {
  return (
    <OrderPanel>
      <CollapseButton aria-label="Collapse"><Triangle /></CollapseButton>
      <OrderGrid>
        <OrderButton tone="buy">BUY MARKET</OrderButton>
        <OrderButton tone="sell">SELL MARKET</OrderButton>
        <OrderButton tone="buy">BUY ASK</OrderButton>
        <OrderButton tone="sell">SELL ASK</OrderButton>
        <OrderButton tone="buy">BUY BID</OrderButton>
        <OrderButton tone="sell">SELL BID</OrderButton>
        <OrderButton tone="neutral">REV</OrderButton>
        <OrderButton tone="neutral">CLOSE</OrderButton>
      </OrderGrid>
      <Position>
        <PositionCell>FLAT</PositionCell>
        <PositionCell divided>ENTRY</PositionCell>
        <Profit>270.00</Profit>
      </Position>
      <FieldRow>
        <label htmlFor="account">Account</label>
        <label htmlFor="qty">Qty</label>
        <SelectBox>
          <Select id="account">
            <option>empireambition</option>
          </Select>
        </SelectBox>
        <QtyBox>
          <QtyInput id="qty" defaultValue="3" />
          <Stepper>
            <Step aria-label="Increase">▲</Step>
            <Step aria-label="Decrease">▼</Step>
          </Stepper>
        </QtyBox>
      </FieldRow>
      <StrategyRow>
        <label htmlFor="strategy">ATM Strategy</label>
        <MoreButton aria-label="Strategy options">...</MoreButton>
      </StrategyRow>
      <SelectBox>
        <Select id="strategy">
          <option>val-3</option>
        </Select>
      </SelectBox>
      <Quotes>
        <dt>A: 59.76</dt>
        <QuoteSize>5</QuoteSize>
        <dt>B: 59.75</dt>
        <QuoteSize>12</QuoteSize>
      </Quotes>
    </OrderPanel>
  );
}

export default function App() {
  return (
    <>
      <GlobalStyle />
      <Desktop>
        <Edge line />
        <Window>
          <ChartToolbar interval="2 Min" />
          <Pane>
            <LeftChart />
            <Title inset={36}>NodeTrader(CL 07-15 (2 Min),{colorArgs}</Title>
            <FixedButton>F</FixedButton>
            <Stats rows={leftStats} />
          </Pane>
          <Scroll />
          <RecorderWindow />
        </Window>
        <Splitter />
        <Window>
          <ChartToolbar interval="300 Tick" active />
          <Body>
            <ChartColumn>
              <Pane>
                <RightChart />
                <Title inset={47}>NodeTrader(CL 07-15 (300 Tick),{colorArgs}</Title>
                <FixedButton>F</FixedButton>
                <Stats rows={stats} />
              </Pane>
              <Scroll />
            </ChartColumn>
            <ChartTrader />
          </Body>
        </Window>
        <Edge />
      </Desktop>
    </>
  );
}
